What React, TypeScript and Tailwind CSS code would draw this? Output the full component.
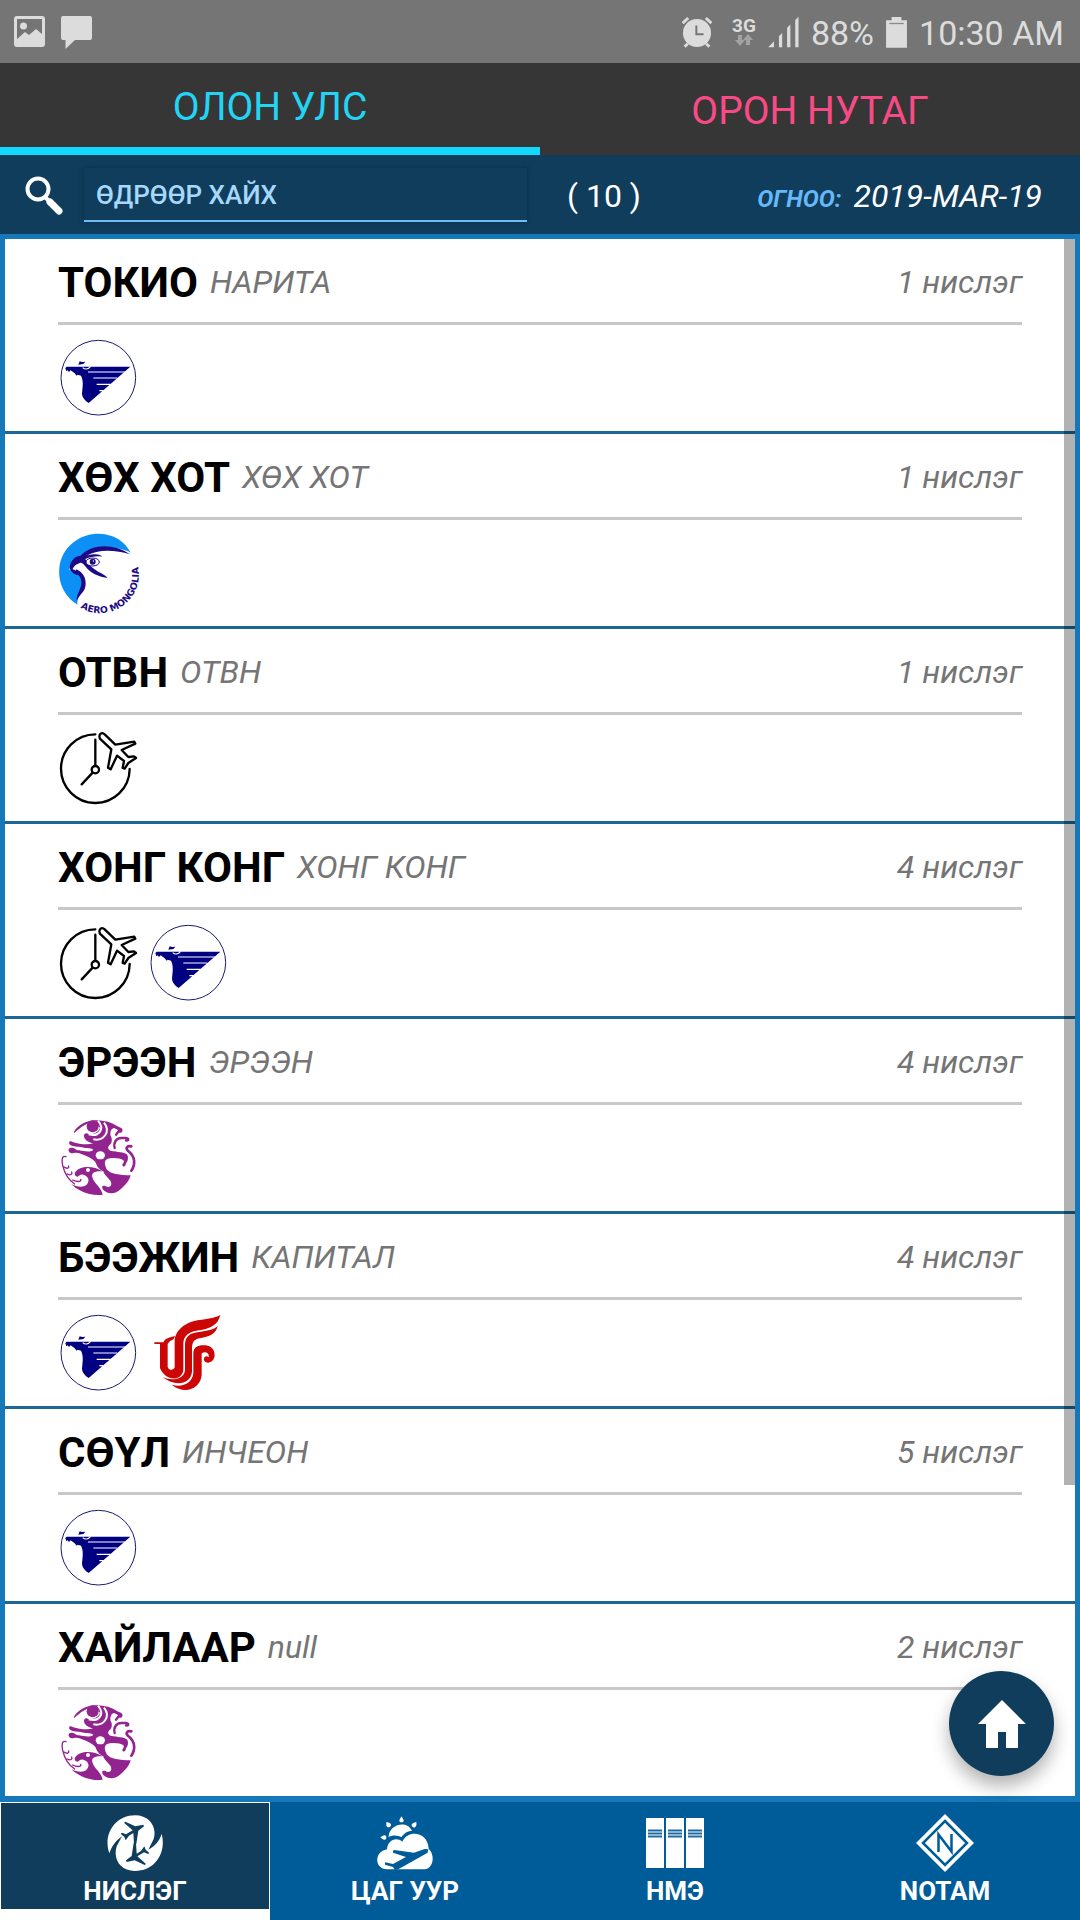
import { useState } from "react"
import type { ReactNode } from "react"

type Airline = "miat" | "aero" | "other" | "hunnu" | "airchina"

type Destination = {
  city: string
  airport: string
  flights: number
  airlines: Airline[]
}

const destinations: Destination[] = [
  { city: "ТОКИО", airport: "НАРИТА", flights: 1, airlines: ["miat"] },
  { city: "ХӨХ ХОТ", airport: "ХӨХ ХОТ", flights: 1, airlines: ["aero"] },
  { city: "ОТВН", airport: "ОТВН", flights: 1, airlines: ["other"] },
  { city: "ХОНГ КОНГ", airport: "ХОНГ КОНГ", flights: 4, airlines: ["other", "miat"] },
  { city: "ЭРЭЭН", airport: "ЭРЭЭН", flights: 4, airlines: ["hunnu"] },
  { city: "БЭЭЖИН", airport: "КАПИТАЛ", flights: 4, airlines: ["miat", "airchina"] },
  { city: "СӨҮЛ", airport: "ИНЧЕОН", flights: 5, airlines: ["miat"] },
  { city: "ХАЙЛААР", airport: "null", flights: 2, airlines: ["hunnu"] },
]

function MiatLogo() {
  return (
    <svg viewBox="174 324 240 240" className="size-20" role="img" aria-label="MIAT">
      <circle cx="295" cy="443" r="112" fill="#fff" stroke="#1a1a70" strokeWidth="3" />
      <path
        fill="#000080"
        d="M200 410H391L266 519C258 514 246 505 246 490C249 465 250 450 243 437L233 434L230 437L224 430L212 421L207 426L203 421L199 424L196 414ZM235 404L239 394L246 396L256 395L250 402Z"
      />
      <path
        fill="none"
        stroke="#fff"
        strokeWidth="3.5"
        d="M264 426H376M280 444H352M290 463H332M298 482H311M248 413C255 419 264 419 272 409"
      />
    </svg>
  )
}

function AeroLogo() {
  return (
    <svg viewBox="54 39 240 240" className="size-20 overflow-visible" role="img" aria-label="Aero Mongolia">
      <path
        fill="#0d90f5"
        d="M112 254C70 228 50 180 60 130C74 72 126 40 178 41C224 43 254 64 272 98C240 80 165 72 126 108C105 112 90 132 88 150C112 150 132 170 131 195C124 220 110 235 112 254Z"
      />
      <path
        fill="#1d0a85"
        d="M122 107C155 70 225 70 270 103C228 90 175 86 140 107C165 100 180 102 188 110C170 107 150 111 136 117C142 132 158 144 176 156C184 160 196 166 203 174C182 171 160 163 146 150C136 140 130 128 122 128C110 132 100 138 98 148C108 150 112 156 112 166C98 160 88 150 89 140C92 122 104 108 122 107ZM108 148C132 156 140 180 136 200C133 216 116 226 110 243C108 222 126 205 124 185C123 172 116 164 106 160Z"
      />
      <ellipse cx="158" cy="126" rx="20" ry="12" fill="#fff" stroke="#1d0a85" strokeWidth="3" />
      <circle cx="158" cy="125" r="9" fill="#1d0a85" />
      <circle cx="160" cy="123" r="2" fill="#fff" />
      <path id="aero-arc" fill="none" d="M121 263A116 116 0 0 0 279 102" />
      <text fill="#1d0a85" className="font-['DejaVu_Sans'] text-[28px] font-bold">
        <textPath href="#aero-arc">AERO MONGOLIA</textPath>
      </text>
    </svg>
  )
}

function OtherLogo() {
  return (
    <svg
      viewBox="54 54 240 240"
      className="size-20"
      fill="none"
      stroke="#000"
      strokeWidth="7"
      strokeLinecap="round"
      strokeLinejoin="round"
      role="img"
      aria-label="Бусад"
    >
      <path d="M166 73A103 103 0 1 0 269 177" />
      <path d="M166 89V167M158 188L125 223" />
      <circle cx="166" cy="179" r="11" />
      <path d="M182 71C177 75 177 83 182 88L214 118L204 173L212 178L231 137L252 153L248 174L254 176L265 159L288 144L282 139L265 141L245 120L286 101L283 95L226 104L194 73C190 69 186 68 182 71Z" />
    </svg>
  )
}

function HunnuLogo() {
  return (
    <svg viewBox="54 54 240 240" className="size-20" fill="#93248f" role="img" aria-label="Hunnu Air">
      <path d="M101 97C112 76 138 62 166 61V65C142 67 120 82 104 98Z" />
      <path d="M164 61C196 61 216 68 232 79L244 84C252 90 246 101 238 98C234 96 238 92 234 90L222 84C212 86 210 98 212 108C218 118 216 130 208 136C202 142 204 150 214 153C232 156 252 156 262 164C266 172 264 184 258 190C258 198 252 202 248 198C244 192 256 188 250 181C240 172 210 172 200 178C190 186 196 198 200 208C210 222 240 226 272 226C268 244 250 262 234 274C220 284 200 280 190 270C184 262 186 254 196 258C208 266 218 258 212 244C204 232 192 224 190 214C176 208 170 196 166 186C158 176 140 168 118 160C108 156 102 160 94 160C84 156 82 144 94 143C104 142 106 150 118 151C132 154 150 158 160 150C156 144 142 146 126 142C110 140 100 140 92 136C82 128 90 120 98 126C118 132 142 136 160 130C144 128 132 118 132 108C132 100 138 98 146 102C160 104 174 98 180 84Z" />
      <path
        fill="none"
        stroke="#fff"
        strokeWidth="6"
        d="M174 62C196 88 176 112 146 103M192 68C214 96 190 124 160 118"
      />
      <circle cx="158" cy="79" r="18" />
      <ellipse cx="181" cy="166" rx="14" ry="12" fill="#fff" />
      <path
        fill="none"
        stroke="#93248f"
        strokeWidth="7"
        strokeLinecap="round"
        d="M224 144C220 128 228 114 244 114H258C268 116 266 124 258 121M228 104L238 91"
      />
      <path
        fill="none"
        stroke="#93248f"
        strokeWidth="8"
        strokeLinecap="round"
        d="M274 139C260 136 254 146 268 156C284 170 288 192 274 212"
      />
      <path d="M106 216C120 196 160 196 188 214C162 212 152 220 158 234C162 250 184 262 188 284C150 290 110 270 94 252C110 262 130 262 138 256C150 244 148 230 130 224C118 222 116 232 112 230C104 228 102 222 106 216Z" />
      <circle cx="144" cy="210" r="6" fill="#fff" />
      <path
        fill="none"
        stroke="#93248f"
        strokeWidth="4"
        strokeLinecap="round"
        d="M78 170C66 166 64 178 68 196C74 222 86 240 104 252M72 201C82 208 88 204 86 198M82 222C92 228 98 222 95 216M98 240C114 248 126 244 122 238"
      />
    </svg>
  )
}

function AirChinaLogo() {
  return (
    <svg viewBox="327 39 240 240" className="size-20" fill="#cc0505" role="img" aria-label="Air China">
      <path d="M544 45C537 74 516 84 490 89C450 93 434 106 433 130V210C430 242 382 248 363 205V132H346V127H373C378 114 392 113 408 108C405 118 402 120 394 122L386 131V200C388 212 404 212 407 202V125C407 90 440 66 480 60C505 57 525 55 544 45Z" />
      <path d="M536 78C531 100 515 108 490 113C466 116 459 124 459 145V215C455 252 410 262 371 232C400 244 436 238 438 210V135C438 106 455 98 485 95C510 92 525 88 536 78Z" />
      <path d="M463 220V160C463 138 482 134 500 136C520 138 530 155 526 172C521 191 499 193 495 180C493 169 504 165 509 172C512 160 500 152 488 160V225C485 264 440 287 398 254C430 264 460 250 463 220Z" />
    </svg>
  )
}

const logos: Record<Airline, () => ReactNode> = {
  miat: MiatLogo,
  aero: AeroLogo,
  other: OtherLogo,
  hunnu: HunnuLogo,
  airchina: AirChinaLogo,
}

const planePath =
  "M72 49L76 46L106 60L130 55L132 60L115 73L109 112H102L100 80L87 88L77 102L73 92L62 82L66 79L78 84L98 72Z"

function FlightIcon() {
  return (
    <svg viewBox="15 20 180 180" className="size-15">
      <path
        fill="#fff"
        d="M28 141C8 85 45 27 105 27C148 27 172 62 161 98L145 130C165 118 178 105 185 82C200 140 165 194 105 194C62 194 38 160 50 120L66 90C45 105 36 120 28 141Z"
      />
      <path fill="#103d5c" d={planePath} />
      <path fill="#103d5c" d={planePath} transform="rotate(180 105 111)" />
    </svg>
  )
}

function WeatherIcon() {
  return (
    <svg viewBox="826 20 180 180" className="size-15" fill="#fff">
      <path d="M867 88C872 52 922 42 937 73C922 74 912 82 906 92C892 86 878 86 867 92Z" />
      <path d="M905 30C910 37 912 41 912 43C911 49 899 49 899 43C899 40 902 36 905 30ZM860 47C869 49 874 51 874 55C875 61 865 66 862 61C859 58 860 53 860 47ZM950 47C951 56 950 60 946 63C940 66 935 59 936 55C938 51 942 49 950 47ZM842 93C848 89 852 86 856 87C862 90 861 99 856 100C851 101 848 98 842 93Z" />
      <path d="M862 189C824 187 822 137 862 129C864 101 890 90 908 106C925 68 985 76 987 127C1008 147 1000 188 975 189Z" />
      <path
        fill="#005c98"
        d="M880 133L884 131L943 139L975 128L986 129L984 139L893 190H885L880 182L856 175L856 168L880 173L919 152L880 139Z"
      />
    </svg>
  )
}

function FoldersIcon() {
  return (
    <svg viewBox="0 0 60 60" className="size-15">
      {[1, 21, 41].map((x) => (
        <g key={x}>
          <rect x={x} y="5" width="18" height="50" fill="#fff" />
          <path d={`M${x + 2} 17.5h14M${x + 2} 20.5h14M${x + 2} 23.5h14`} stroke="#1d6ba3" strokeWidth="2" />
        </g>
      ))}
    </svg>
  )
}

function NotamIcon() {
  return (
    <svg viewBox="0 0 60 60" className="size-15">
      <path d="M30 1L59 30L30 59L1 30Z" fill="#fff" />
      <path d="M30 8L52 30L30 52L8 30Z" fill="#fff" stroke="#005c98" strokeWidth="2.5" />
      <path d="M23.500 39V21.500L36.500 38.500V21" fill="none" stroke="#005c98" strokeWidth="2.5" />
    </svg>
  )
}

function StatusBar() {
  return (
    <div className="flex h-[63px] items-center justify-between bg-[#757575] pr-4 pl-3.5 text-[#dcdcdc]">
      <div className="flex items-center gap-4">
        <svg viewBox="0 0 31 31" className="size-[31px]" fill="currentColor">
          <path
            fillRule="evenodd"
            d="M3 0H28Q31 0 31 3V28Q31 31 28 31H3Q0 31 0 28V3Q0 0 3 0ZM3 3V23L11 16L15 19L22 13L28 18V3Z"
          />
          <circle cx="9.500" cy="10" r="3.500" />
        </svg>
        <svg viewBox="0 0 31 33" className="mt-0.5 h-[33px] w-[31px]" fill="currentColor">
          <path d="M2 0H29Q31 0 31 2V22Q31 24 29 24H14L4.500 33V24H2Q0 24 0 22V2Q0 0 2 0Z" />
        </svg>
      </div>
      <div className="flex items-center gap-3">
        <svg viewBox="35 30 92 98" className="mr-2 h-8 w-[30px]" fill="currentColor">
          <circle cx="81" cy="82" r="43" />
          <path
            d="M37 52L54 36M125 52L108 36M53 115L43 124M109 115L119 124"
            stroke="currentColor"
            strokeWidth="9"
          />
          <path d="M79 59V86H101" fill="none" stroke="#757575" strokeWidth="6" />
        </svg>
        <div className="flex flex-col items-center">
          <span className="text-[19px] leading-4 font-bold">3G</span>
          <svg viewBox="0 0 18 12" className="h-3 w-[18px]" fill="#a2a2a2">
            <path d="M3 1H7V6H10L5 12L0 6H3ZM11 11H15V6H18L13 0L8 6H11Z" />
          </svg>
        </div>
        <svg viewBox="300 30 94 98" className="h-8 w-[31px]" fill="currentColor">
          <path d="M300 126L318 107V126ZM333 92L343 82V126H333ZM358 66L368 56V126H358ZM383 42L393 32V126H383Z" />
        </svg>
        <span className="pt-1 text-[34px]">88%</span>
        <svg viewBox="650 30 64 98" className="h-8 w-[21px]" fill="currentColor">
          <path d="M650 43H667V33H697V43H714V127H650Z" />
          <path d="M660 53H704" stroke="#8a8a8a" strokeWidth="4" />
        </svg>
        <span className="pt-1 text-[34px]">10:30 AM</span>
      </div>
    </div>
  )
}

export default function App() {
  const [tab, setTab] = useState("international")
  const [page, setPage] = useState("flights")
  const [query, setQuery] = useState("")

  const tabs = [
    { id: "international", label: "ОЛОН УЛС", color: "text-[#22d5f5]" },
    { id: "domestic", label: "ОРОН НУТАГ", color: "text-[#f84b86]" },
  ]

  const navItems = [
    { id: "flights", label: "НИСЛЭГ", icon: <FlightIcon /> },
    { id: "weather", label: "ЦАГ УУР", icon: <WeatherIcon /> },
    { id: "nme", label: "НМЭ", icon: <FoldersIcon /> },
    { id: "notam", label: "NOTAM", icon: <NotamIcon /> },
  ]

  return (
    <div className="flex min-h-screen flex-col bg-[#103d5c] font-['Roboto',sans-serif]">
      <StatusBar />

      <div className="grid h-23 grid-cols-2 bg-[#363636]">
        {tabs.map((item) => (
          <button
            key={item.id}
            onClick={() => setTab(item.id)}
            className={`pt-1 text-[39px] ${item.color} ${tab === item.id ? "border-b-8 border-[#12d8ff]" : ""}`}
          >
            {item.label}
          </button>
        ))}
      </div>

      {/* Search */}
      <div className="flex h-[79px] items-center pr-[38px] pl-6">
        <label htmlFor="search" aria-label="Хайх">
          <svg viewBox="0 0 40 40" className="size-10" fill="none" stroke="#fff">
            <circle cx="14" cy="14" r="10.500" strokeWidth="4" />
            <path d="M21 22L26 27" strokeWidth="4" />
            <path d="M26 27L35 36" strokeWidth="7" strokeLinecap="round" />
          </svg>
        </label>
        <input
          id="search"
          value={query}
          onChange={(e) => setQuery(e.target.value)}
          placeholder="ӨДРӨӨР ХАЙХ"
          className="ml-5 h-[54px] w-[443px] border-b-2 border-[#6cbdf5] px-3 pt-0.5 text-[26px] font-medium text-white shadow-[0_0_4px_#0a2c44] outline-none placeholder:text-[#a6d8fb]"
        />
        <span className="ml-10 pt-0.5 text-[32px] text-white">( 10 )</span>
        <div className="ml-auto flex items-baseline gap-3 pt-0.5 italic">
          <span className="text-2xl font-bold text-[#66b8f8]">ОГНОО:</span>
          <span className="text-[32px] text-white">2019-MAR-19</span>
        </div>
      </div>

      {/* Destinations */}
      <main className="relative flex-1 border-5 border-b-6 border-[#1578b8] bg-white">
        <ul className="divide-y-3 divide-[#1d6796]">
          {destinations.map((d) => (
            <li key={d.city} className="px-[53px]">
              <div className="flex h-[86px] items-center border-b-3 border-[#c8c8c8] pt-0.5">
                <h2 className="pt-0.5 text-[42px] font-bold text-black">{d.city}</h2>
                <span className="ml-3 text-[32px] text-[#757575] italic">{d.airport}</span>
                <span className="ml-auto text-[32px] text-[#757575] italic">{d.flights} нислэг</span>
              </div>
              <div className="flex h-[106px] items-center gap-2.5">
                {d.airlines.map((airline) => {
                  const Logo = logos[airline]
                  return <Logo key={airline} />
                })}
              </div>
            </li>
          ))}
        </ul>
        <div className="absolute top-0 right-0 h-4/5 w-[11px] bg-black/30" />
        <button
          aria-label="Нүүр"
          className="absolute right-[21px] bottom-5 flex size-[105px] items-center justify-center rounded-full bg-[#103d5c] shadow-[0_10px_18px_rgba(0,0,0,0.3)]"
        >
          <svg viewBox="0 0 48 50" className="h-[50px] w-12" fill="#fff">
            <path d="M24 1L48 25H40V49H28V33H20V49H8V25H0Z" />
          </svg>
        </button>
      </main>

      <nav className="grid h-[118px] grid-cols-4 bg-[#005c98]">
        {navItems.map((item) => (
          <button
            key={item.id}
            onClick={() => setPage(item.id)}
            className={`flex flex-col items-center border-x border-t border-b-11 pt-2.5 text-[26px] leading-9 font-bold text-white ${
              page === item.id ? "border-white bg-[#103d5c]" : "border-[#005c98]"
            }`}
          >
            {item.icon}
            {item.label}
          </button>
        ))}
      </nav>
    </div>
  )
}
